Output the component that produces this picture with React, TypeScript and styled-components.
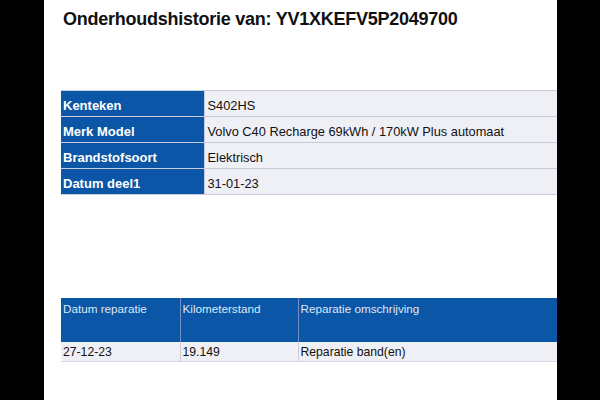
import styled, { createGlobalStyle } from "styled-components";

const GlobalStyle = createGlobalStyle`
  html, body {
    margin: 0;
    padding: 0;
    background: #000;
  }
`;

const Page = styled.div`
  margin-left: 44px;
  width: 513px;
  height: 400px;
  background: #fff;
  overflow: hidden;
  box-sizing: border-box;
  padding: 8px 0 0 17px;
`;

const Title = styled.h1`
  margin: 0 0 0 2px;
  font-family: "Liberation Sans", Arial, sans-serif;
  font-size: 18px;
  letter-spacing: -0.25px;
  font-weight: bold;
  color: #111;
  line-height: 22px;
`;

const Table = styled.table<{ $top: number }>`
  margin-top: ${(p) => p.$top}px;
  width: 560px;
  border-collapse: collapse;
  font-family: "Liberation Sans", Tahoma, sans-serif;
  table-layout: fixed;
`;

const Label = styled.th`
  width: 143px;
  height: 26px;
  box-sizing: border-box;
  background: #0b56a6;
  color: #fff;
  font-size: 13px;
  font-weight: bold;
  text-align: left;
  padding: 3px 2px 0;
  border: 1px solid #c9cadc;
  border-left: none;
`;

const Value = styled.td`
  height: 26px;
  box-sizing: border-box;
  background: #efeff6;
  color: #111;
  font-size: 12.8px;
  padding: 3px 3px 0;
  border: 1px solid #c9cadc;
  white-space: nowrap;
`;

const HeadCell = styled.th<{ $w?: number }>`
  width: ${(p) => (p.$w ? `${p.$w}px` : "auto")};
  height: 44px;
  box-sizing: border-box;
  background: #0b56a6;
  color: #dfe9f7;
  font-size: 11.7px;
  font-weight: normal;
  text-align: left;
  vertical-align: top;
  padding: 4px 2px 0;
  border-right: 1px solid #6f93c8;
`;

const Cell = styled.td`
  height: 19px;
  box-sizing: border-box;
  background: #efeff6;
  color: #111;
  font-size: 12.2px;
  padding: 2px 2px 0;
  border-right: 1px solid #c9cadc;
  border-bottom: 1px solid #d8d8e2;
  white-space: nowrap;
`;

const vehicle = [
  ["Kenteken", "S402HS"],
  ["Merk Model", "Volvo C40 Recharge 69kWh / 170kW Plus automaat"],
  ["Brandstofsoort", "Elektrisch"],
  ["Datum deel1", "31-01-23"],
];

const repairs = [{ datum: "27-12-23", km: "19.149", omschrijving: "Reparatie band(en)" }];

const App = () => {
  return (
    <Page>
      <GlobalStyle />
      <Title>Onderhoudshistorie van: YV1XKEFV5P2049700</Title>
      <Table $top={60}>
        <tbody>
          {vehicle.map(([label, value]) => (
            <tr key={label}>
              <Label>{label}</Label>
              <Value>{value}</Value>
            </tr>
          ))}
        </tbody>
      </Table>
      <Table $top={103}>
        <thead>
          <tr>
            <HeadCell $w={119}>Datum reparatie</HeadCell>
            <HeadCell $w={118}>Kilometerstand</HeadCell>
            <HeadCell>Reparatie omschrijving</HeadCell>
          </tr>
        </thead>
        <tbody>
          {repairs.map((r) => (
            <tr key={r.datum}>
              <Cell>{r.datum}</Cell>
              <Cell>{r.km}</Cell>
              <Cell>{r.omschrijving}</Cell>
            </tr>
          ))}
        </tbody>
      </Table>
    </Page>
  );
};

export default App;
